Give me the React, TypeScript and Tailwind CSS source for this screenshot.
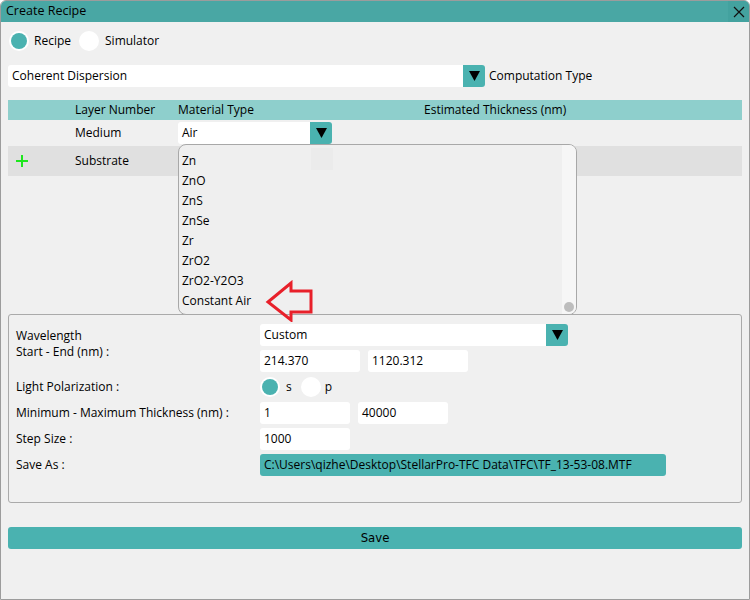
import React from 'react';

const font = { fontFamily: '"Open Sans", "Liberation Sans", sans-serif' };

const Arrow: React.FC = () => (
  <svg width="11" height="10" viewBox="0 0 11 10">
    <polygon points="0,0 11,0 5.5,10" fill="#000" />
  </svg>
);

const Combo: React.FC<{ value: string; className?: string }> = ({ value, className = '' }) => (
  <div className={`flex h-[22px] ${className}`}>
    <div className="flex-1 bg-white rounded-l-[3px] flex items-center pl-[4px] text-[12px]">{value}</div>
    <div className="w-[22px] bg-[#4ab2b0] rounded-r-[3px] flex items-center justify-center">
      <Arrow />
    </div>
  </div>
);

const Radio: React.FC<{ checked?: boolean }> = ({ checked }) => (
  <div className="w-[20px] h-[20px] rounded-full bg-white p-[2px]">
    {checked && <div className="w-full h-full rounded-full bg-[#4ab2b0]" />}
  </div>
);

const Input: React.FC<{ value: string; w: string }> = ({ value, w }) => (
  <div className={`h-[22px] ${w} bg-white rounded-[3px] flex items-center pl-[4px] text-[12px]`}>{value}</div>
);

const materials = ['Zn', 'ZnO', 'ZnS', 'ZnSe', 'Zr', 'ZrO2', 'ZrO2-Y2O3', 'Constant Air'];

export default function App() {
  return (
    <div
      className="w-[750px] h-[600px] relative flex flex-col bg-[#f0f0f0] border border-[#9c9c9c] rounded-t-[6px] overflow-hidden text-[12px] text-black"
      style={font}
    >
      {/* title bar */}
      <div className="h-[21px] shrink-0 flex items-center bg-[#49a7a4]">
        <span className="pl-[5px] text-[12.5px]">Create Recipe</span>
        <div className="ml-auto w-[21px] h-full bg-[#43a29f] flex items-center justify-center">
          <svg width="12" height="12" viewBox="0 0 12 12">
            <path d="M1 1 L11 11 M11 1 L1 11" stroke="#111" strokeWidth="1.2" />
          </svg>
        </div>
      </div>

      <div className="px-[7px] flex flex-col">
        {/* mode radios */}
        <div className="mt-[9px] h-[20px] flex items-center">
          <div className="ml-[1px]"><Radio checked /></div>
          <span className="ml-[5px]">Recipe</span>
          <div className="ml-[8px]"><Radio /></div>
          <span className="ml-[6px]">Simulator</span>
        </div>

        {/* computation type */}
        <div className="mt-[14px] flex items-center">
          <Combo value="Coherent Dispersion" className="w-[477px]" />
          <span className="ml-[4px]">Computation Type</span>
        </div>

        {/* layer table */}
        <div className="mt-[13px] h-[20px] bg-[#8ecfcc] flex items-center">
          <span className="ml-[67px] w-[103px]">Layer Number</span>
          <span className="w-[246px]">Material Type</span>
          <span>Estimated Thickness (nm)</span>
        </div>
        <div className="h-[26px] flex items-center">
          <span className="ml-[67px] w-[103px]">Medium</span>
          <Combo value="Air" className="w-[154px]" />
        </div>
        <div className="h-[30px] bg-[#e0e0e0] flex items-center">
          <div className="ml-[8px] w-[59px]">
            <svg width="12" height="12" viewBox="0 0 12 12">
              <path d="M6 0 V12 M0 6 H12" stroke="#1ee61e" strokeWidth="2" />
            </svg>
          </div>
          <span className="w-[103px]">Substrate</span>
        </div>

        {/* settings group */}
        <div className="mt-[138px] h-[189px] border border-[#aaaaaa] rounded-[3px] px-[7px] pt-[9px]">
          <div className="flex">
            <div className="w-[244px] pt-[4px] leading-[16px]">
              <div>Wavelength</div>
              <div>Start - End (nm) :</div>
            </div>
            <div className="flex flex-col gap-[4px]">
              <Combo value="Custom" className="w-[308px]" />
              <div className="flex gap-[8px]">
                <Input value="214.370" w="w-[100px]" />
                <Input value="1120.312" w="w-[100px]" />
              </div>
            </div>
          </div>
          <div className="flex items-center mt-[5px] h-[20px]">
            <span className="w-[244px]">Light Polarization :</span>
            <Radio checked />
            <span className="ml-[6px]">s</span>
            <div className="ml-[9px]"><Radio /></div>
            <span className="ml-[4px]">p</span>
          </div>
          <div className="flex items-center mt-[5px]">
            <span className="w-[244px]">Minimum - Maximum Thickness (nm) :</span>
            <div className="flex gap-[8px]">
              <Input value="1" w="w-[90px]" />
              <Input value="40000" w="w-[90px]" />
            </div>
          </div>
          <div className="flex items-center mt-[4px]">
            <span className="w-[244px]">Step Size :</span>
            <Input value="1000" w="w-[90px]" />
          </div>
          <div className="flex items-center mt-[4px]">
            <span className="w-[244px]">Save As :</span>
            <div className="h-[22px] w-[406px] bg-[#4ab2b0] rounded-[3px] flex items-center pl-[4px] whitespace-nowrap">
              C:\Users\qizhe\Desktop\StellarPro-TFC Data\TFC\TF_13-53-08.MTF
            </div>
          </div>
        </div>

        {/* save */}
        <button
          className="mt-[24px] h-[22px] w-full bg-[#4ab2b0] rounded-[3px] text-[13px] flex items-center justify-center"
          style={{ fontFamily: '"Liberation Sans Narrow", "DejaVu Sans Condensed", sans-serif' }}
        >
          Save
        </button>
      </div>

      {/* open material dropdown */}
      <div className="absolute left-[177px] top-[143px] w-[399px] h-[171px] rounded-[8px] border border-[#a8a8a8] bg-[#efefef] overflow-hidden flex">
        <div className="flex-1 pt-[6px] pl-[3px] relative">
          <div className="absolute left-[132px] top-[3px] w-[22px] h-[22px] bg-[#ebebeb]" />
          {materials.map(m => (
            <div key={m} className="h-[20px] flex items-center relative">{m}</div>
          ))}
        </div>
        <div className="w-[14px] bg-[#f6f6f6] flex flex-col justify-end items-center pb-[2px]">
          <div className="w-[10px] h-[10px] rounded-full bg-[#bdbdbd]" />
        </div>
      </div>

      {/* annotation arrow */}
      <svg className="absolute left-[264px] top-[279px]" width="50" height="42" viewBox="0 0 50 42">
        <polygon
          points="3,22 26,3 26,11 46,11 46,32 26,32 26,40"
          fill="none"
          stroke="#e8202a"
          strokeWidth="3"
          strokeLinejoin="miter"
        />
      </svg>
    </div>
  );
}
